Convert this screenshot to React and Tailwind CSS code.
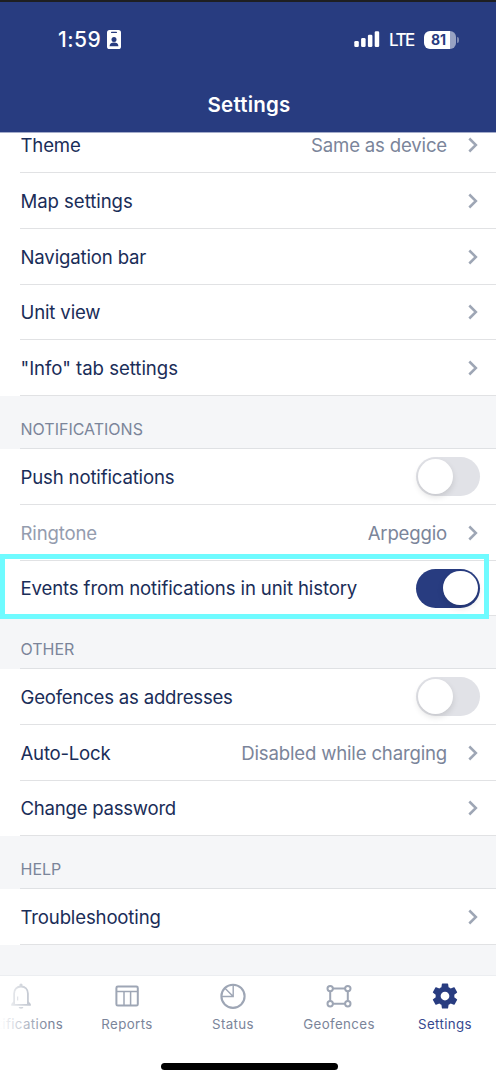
import React from "react";

function Chevron() {
  return (
    <svg className="ml-[21px] mr-[18px] shrink-0" width="10" height="16" viewBox="0 0 10 16" fill="none">
      <path d="M1.3 1.5 L7.9 8 L1.3 14.5" stroke="#9ea6b5" strokeWidth="2.5" />
    </svg>
  );
}

function Toggle({ on }) {
  return (
    <div
      className={
        "mr-4 flex h-[39px] w-[64.5px] shrink-0 items-center rounded-full px-[2.5px] " +
        (on ? "justify-end bg-[#283c80]" : "justify-start bg-[#e1e2e7]")
      }
    >
      <div className="size-[34.5px] rounded-full bg-white shadow-[0_3px_6px_rgba(0,0,0,0.12)]" />
    </div>
  );
}

function Row({ label, value, toggle, on, muted, height = "h-14", spacing = "tracking-[-0.16px]" }) {
  return (
    <div className={"pl-5 " + height}>
      <div className="flex h-full items-center border-b border-[#e1e2e4]">
        <span className={"grow whitespace-nowrap pl-[0.5px] text-[18.6px] leading-6 " + spacing + (muted ? " text-[#949cae]" : " text-[#1a2d58]")}>
          {label}
        </span>
        {value && <span className="whitespace-nowrap text-[18.6px] leading-6 tracking-[-0.18px] text-[#7b859a]">{value}</span>}
        {toggle ? <Toggle on={on} /> : <Chevron />}
      </div>
    </div>
  );
}

function Section({ title }) {
  return (
    <div className="h-[53px] bg-[#f5f6f8] pl-5">
      <div className="flex h-full items-end border-b border-[#dfe1e4] pb-[7px]">
        <span className="pl-[0.5px] text-[16px] leading-6 text-[#7b859a]">{title}</span>
      </div>
    </div>
  );
}

function StatusBar() {
  return (
    <div className="flex h-[75px] items-center">
      <span className="ml-[58px] w-[49px] text-[21px] font-medium leading-6 tracking-[0.5px]">1:59</span>
      <svg width="14" height="19" viewBox="0 0 14 19">
        <rect width="14" height="19" rx="2.6" fill="#fff" />
        <rect x="4" y="1.8" width="6" height="1.2" rx=".6" fill="#283c80" />
        <circle cx="7" cy="9.4" r="2.5" fill="#283c80" />
        <path d="M2.6 16.3c0-2.8 1.9-3.7 4.4-3.7s4.4.9 4.4 3.7z" fill="#283c80" />
      </svg>
      <svg className="ml-auto mr-[9px]" width="26" height="17" viewBox="0 0 26 17" fill="#fff">
        <rect x="0.3" y="10" width="4.5" height="6" rx="1.3" />
        <rect x="7.1" y="7" width="4.5" height="9" rx="1.3" />
        <rect x="13.9" y="3.7" width="4.5" height="12.3" rx="1.3" />
        <rect x="20.7" y="0.2" width="4.5" height="15.8" rx="1.3" />
      </svg>
      <span className="w-[35px] whitespace-nowrap text-[17px] font-medium leading-6 tracking-[-1.5px]">LTE</span>
      <div className="flex h-[18px] w-8 items-center overflow-hidden rounded-[6px] bg-linear-to-r from-white from-81% to-[#98a2c2] to-81% pl-[7px]">
        <span className="text-[14px] font-bold leading-none tracking-[-0.2px] text-[#283c80]">81</span>
      </div>
      <div className="ml-[1px] mr-[37px] h-[6px] w-[2px] rounded-r-full bg-[#7d89b2]" />
    </div>
  );
}

const icons = {
  bell: (
    <svg width="26" height="26" viewBox="0 0 26 26" fill="none" stroke="#9ea6b5" strokeWidth="1.8">
      <path d="M6.1 21V10.5C6.1 6.2 9 3.5 13 3.5s6.9 2.7 6.9 7V21" />
      <path d="M3.2 21.8h19.6M4 21.3l2.3-2.5M22 21.3l-2.3-2.5" />
      <path d="M10.6 24a2.4 1.8 0 0 0 4.8 0z" fill="#9ea6b5" stroke="none" />
      <circle cx="13" cy="2" r="1.6" fill="#9ea6b5" stroke="none" />
      <path d="M9.7 13.5v4" strokeWidth="1" />
    </svg>
  ),
  reports: (
    <svg width="26" height="26" viewBox="0 0 26 26" fill="none" stroke="#9ea6b5">
      <rect x="2.4" y="3.6" width="21.4" height="19" rx="1.4" strokeWidth="2" />
      <path d="M2.4 8.6h21.4M10 8.6v14M16.6 8.6v14" strokeWidth="1.5" />
    </svg>
  ),
  status: (
    <svg width="26" height="26" viewBox="0 0 26 26" fill="none" stroke="#9ea6b5">
      <circle cx="13" cy="13.3" r="11.6" strokeWidth="2.1" />
      <path d="M13.2 1.8v11.7H1.5M13.2 13.5L5 5.3" strokeWidth="1.4" />
    </svg>
  ),
  geofences: (
    <svg width="26" height="26" viewBox="0 0 26 26" fill="none" stroke="#9ea6b5" strokeWidth="2">
      <path d="M7 5.6h12M7 20.8h12M4.2 8v10M21.8 8v10" />
      <circle cx="4.2" cy="5.6" r="2.7" />
      <circle cx="21.8" cy="5.6" r="2.7" />
      <circle cx="4.2" cy="20.8" r="2.7" />
      <circle cx="21.8" cy="20.8" r="2.7" />
    </svg>
  ),
  settings: (
    <svg width="30" height="30" viewBox="0 0 24 24" fill="#283c80">
      <path d="M19.43 12.98c.04-.32.07-.64.07-.98s-.03-.66-.07-.98l2.11-1.65c.19-.15.24-.42.12-.64l-2-3.46c-.12-.22-.39-.3-.61-.22l-2.49 1c-.52-.4-1.08-.73-1.69-.98l-.38-2.65C14.46 2.18 14.25 2 14 2h-4c-.25 0-.46.18-.49.42l-.38 2.65c-.61.25-1.17.59-1.69.98l-2.49-1c-.23-.09-.49 0-.61.22l-2 3.46c-.13.22-.07.49.12.64l2.11 1.65c-.04.32-.07.65-.07.98s.03.66.07.98l-2.11 1.65c-.19.15-.24.42-.12.64l2 3.46c.12.22.39.3.61.22l2.49-1c.52.4 1.08.73 1.69.98l.38 2.65c.03.24.24.42.49.42h4c.25 0 .46-.18.49-.42l.38-2.65c.61-.25 1.17-.59 1.69-.98l2.49 1c.23.09.49 0 .61-.22l2-3.46c.12-.22.07-.49-.12-.64l-2.11-1.65zM12 15.5c-1.93 0-3.5-1.57-3.5-3.5s1.57-3.5 3.5-3.5 3.5 1.57 3.5 3.5-1.57 3.5-3.5 3.5z" />
    </svg>
  ),
};

function Tab({ icon, label, active }) {
  return (
    <div className="flex w-[106px] shrink-0 flex-col items-center">
      <div className="flex h-[26px] items-center">{icons[icon]}</div>
      <span className={"mt-[5px] whitespace-nowrap text-[13.3px] leading-5 tracking-[0.38px] " + (active ? "text-[#35488f]" : "text-[#7b859a]")}>
        {label}
      </span>
    </div>
  );
}

export default function App() {
  return (
    <div className="flex h-[1076px] w-[496px] flex-col overflow-hidden bg-[#f5f6f8] font-['Inter',sans-serif]">
      <header className="h-[133px] shrink-0 border-b border-t-2 border-b-[#a4acca] border-t-[#1e1f22] bg-[#283c80] text-white">
        <StatusBar />
        <h1 className="mt-[16px] pl-[2px] text-center text-[20.5px] font-semibold leading-6 tracking-[0.2px]">Settings</h1>
      </header>
      <main className="h-[842px] shrink-0 overflow-hidden">
        <div className="relative -mt-4 bg-white">
          <Row label="Theme" value="Same as device" />
          <Row label="Map settings" spacing="tracking-[-0.06px]" />
          <Row label="Navigation bar" />
          <Row label="Unit view" height="h-[55px]" />
          <Row label={'"Info" tab settings'} spacing="tracking-[-0.03px]" />
          <Section title="NOTIFICATIONS" />
          <Row label="Push notifications" toggle />
          <Row label="Ringtone" value="Arpeggio" muted />
          <div className="relative">
            <Row label="Events from notifications in unit history" toggle on height="h-[55px]" spacing="tracking-[-0.13px]" />
            <div className="absolute -top-[7px] left-0 h-[65px] w-[489px] border-[5px] border-[#6ffbff]" />
          </div>
          <Section title="OTHER" />
          <Row label="Geofences as addresses" toggle spacing="tracking-[-0.22px]" />
          <Row label="Auto-Lock" value="Disabled while charging" spacing="tracking-[-0.22px]" />
          <Row label="Change password" height="h-[55px]" spacing="tracking-[-0.25px]" />
          <Section title="HELP" />
          <Row label="Troubleshooting" />
        </div>
      </main>
      <nav className="relative h-[101px] shrink-0 border-t border-[#eceef1] bg-white">
        <div className="-ml-8 flex pt-[7px]">
          <Tab icon="bell" label="Notifications" />
          <Tab icon="reports" label="Reports" />
          <Tab icon="status" label="Status" />
          <Tab icon="geofences" label="Geofences" />
          <Tab icon="settings" label="Settings" active />
        </div>
        <div className="absolute left-0 top-0 h-16 w-12 bg-linear-to-r from-white to-white/0" />
        <div className="mx-auto mt-[29px] h-[7px] w-[177px] translate-x-px rounded-full bg-black" />
      </nav>
    </div>
  );
}
